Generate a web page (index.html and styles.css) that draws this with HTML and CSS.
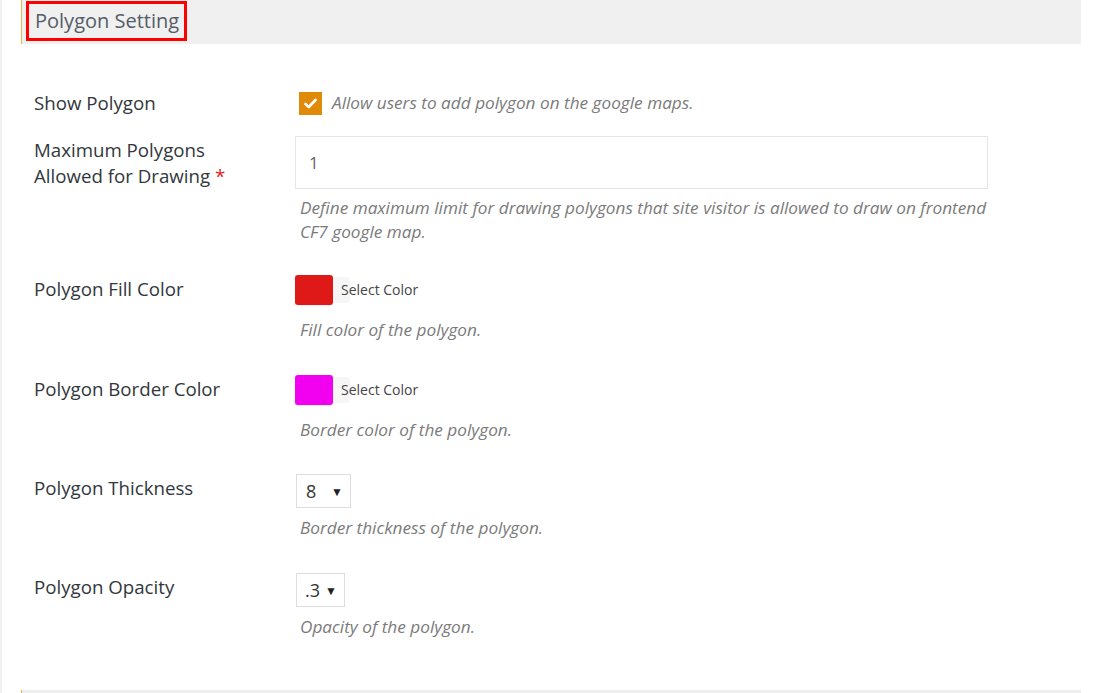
FILE: index.html
```html
<!DOCTYPE html>
<html>
<head>
<meta charset="utf-8">
<link rel="stylesheet" href="styles.css">
</head>
<body>
<div class="page">
  <div class="section-head">
    <h2 class="section-title">Polygon Setting</h2>
  </div>
  <div class="form">
    <div class="row row-check">
      <div class="label">Show Polygon</div>
      <div class="field field-inline">
        <span class="checkbox">
          <svg width="13" height="11" viewBox="0 0 13 11"><path d="M1.5 6 L4.8 9 L11.5 2" fill="none" stroke="#fff" stroke-width="2.6" stroke-linecap="round" stroke-linejoin="round"/></svg>
        </span>
        <span class="desc desc-inline">Allow users to add polygon on the google maps.</span>
      </div>
    </div>

    <div class="row row-input">
      <div class="label">Maximum Polygons<br>Allowed for Drawing <span class="req">*</span></div>
      <div class="field">
        <div class="text-input">1</div>
        <div class="desc desc-input">Define maximum limit for drawing polygons that site visitor is allowed to draw on frontend CF7 google map.</div>
      </div>
    </div>

    <div class="row row-a">
      <div class="label">Polygon Fill Color</div>
      <div class="field">
        <div class="picker">
          <span class="swatch swatch-red"></span>
          <span class="picker-btn"></span>
          <span class="picker-text">Select Color</span>
        </div>
        <div class="desc desc-picker">Fill color of the polygon.</div>
      </div>
    </div>

    <div class="row row-b">
      <div class="label">Polygon Border Color</div>
      <div class="field">
        <div class="picker">
          <span class="swatch swatch-magenta"></span>
          <span class="picker-btn"></span>
          <span class="picker-text">Select Color</span>
        </div>
        <div class="desc desc-picker">Border color of the polygon.</div>
      </div>
    </div>

    <div class="row row-c">
      <div class="label">Polygon Thickness</div>
      <div class="field">
        <div class="select select-wide"><span class="sel-val">8</span><span class="arrow">▼</span></div>
        <div class="desc desc-select">Border thickness of the polygon.</div>
      </div>
    </div>

    <div class="row row-d">
      <div class="label">Polygon Opacity</div>
      <div class="field">
        <div class="select select-narrow"><span class="sel-val">.3</span><span class="arrow">▼</span></div>
        <div class="desc desc-select">Opacity of the polygon.</div>
      </div>
    </div>
  </div>
  <div class="section-head next-head"></div>
</div>
</body>
</html>
```

FILE: styles.css
```css
* { box-sizing: border-box; }
html, body {
  margin: 0;
  padding: 0;
  background: #ffffff;
  height: 100%;
}
body {
  font-family: "Open Sans", "Noto Sans", sans-serif;
  color: #32373c;
  border-left: 2px solid #f1f1f1;
  overflow: hidden;
}
.page {
  margin-left: 19px;
  width: 1060px;
}
.section-head {
  height: 44px;
  background: #f0f0f0;
  border-left: 1px solid #e3b84c;
  padding: 1px 0 0 4px;
}
.section-title {
  display: inline-block;
  margin: 0;
  height: 40px;
  border: 3px solid #ff0000;
  padding: 0 5px 0 6px;
  font-size: 20px;
  line-height: 33px;
  font-weight: 400;
  color: #555d66;
}
.form {
  padding: 44px 0 51px 13px;
}
.row {
  display: flex;
  align-items: flex-start;
}
.label {
  width: 261px;
  flex: none;
  font-size: 18.7px;
  line-height: 26px;
  color: #32373c;
}
.req { color: #e2231a; }
.row-check { height: 30px; align-items: center; }
.field-inline { display: flex; align-items: center; }
.checkbox {
  width: 23px;
  height: 23px;
  margin-left: 4px;
  background: #e08a0a;
  display: flex;
  align-items: center;
  justify-content: center;
}
.desc {
  font-size: 17.2px;
  line-height: 24px;
  font-style: italic;
  color: #7b7b7b;
  padding-left: 5px;
  width: 700px;
}
.desc-inline { padding-left: 10px; width: auto; }
.row-input { margin-top: 18px; }
.row-input .label { padding-top: 1px; }
.text-input {
  width: 693px;
  height: 53px;
  border: 1px solid #e5e5e5;
  padding-left: 13px;
  font-size: 17px;
  line-height: 51px;
  color: #666;
}
.desc-input { margin-top: 7px; }
.row-a { margin-top: 31px; }
.row-b { margin-top: 33px; }
.row-c { margin-top: 32px; }
.row-d { margin-top: 33px; }
.row-a .label, .row-b .label, .row-c .label, .row-d .label { padding-top: 1px; }
.picker {
  display: flex;
  align-items: flex-start;
  height: 34px;
}
.swatch {
  width: 38px;
  height: 30px;
  border-radius: 3px;
  box-shadow: 0 1px 1px rgba(0,0,0,0.08);
}
.swatch-red { background: #df1818; }
.swatch-magenta { background: #f200f0; }
.picker-btn {
  width: 17px;
  height: 26px;
  margin-top: 2px;
  background: #f6f6f6;
  border-radius: 0 3px 3px 0;
}
.picker-text {
  margin-left: -9px;
  font-size: 14px;
  line-height: 30px;
  color: #444;
}
.desc-picker { margin-top: 9px; }
.select {
  margin-left: 1px;
  height: 34px;
  border: 1px solid #dddddd;
  display: flex;
  align-items: center;
  padding-left: 9px;
  font-size: 18px;
  color: #333;
}
.select-wide { width: 55px; }
.select-narrow { width: 49px; padding-left: 8px; }
.sel-val { line-height: 32px; }
.arrow {
  font-size: 12px;
  margin-left: auto;
  margin-right: 7px;
  color: #222;
}
.desc-select { margin-top: 8px; }
.next-head { height: 10px; background: #eeeeee; }
```
